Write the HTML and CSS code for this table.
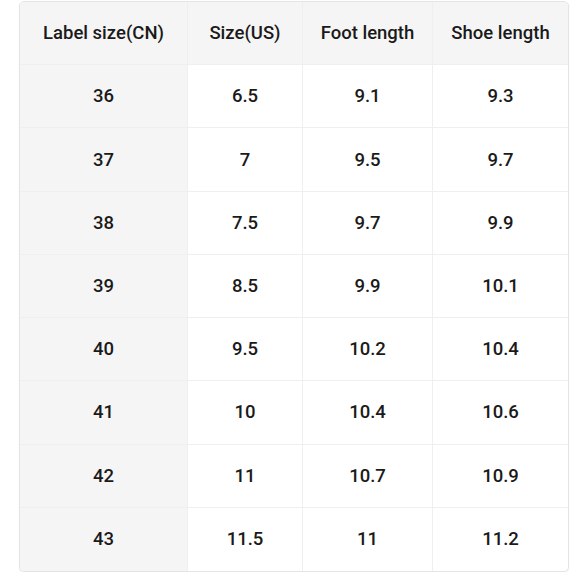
FILE: index.html
```html
<!DOCTYPE html>
<html>
<head>
<meta charset="utf-8">
<link rel="stylesheet" href="styles.css">
</head>
<body>
<div class="table">
  <div class="cell head">Label size(CN)</div>
  <div class="cell head">Size(US)</div>
  <div class="cell head">Foot length</div>
  <div class="cell head">Shoe length</div>

  <div class="cell first">36</div><div class="cell">6.5</div><div class="cell">9.1</div><div class="cell">9.3</div>
  <div class="cell first">37</div><div class="cell">7</div><div class="cell">9.5</div><div class="cell">9.7</div>
  <div class="cell first">38</div><div class="cell">7.5</div><div class="cell">9.7</div><div class="cell">9.9</div>
  <div class="cell first">39</div><div class="cell">8.5</div><div class="cell">9.9</div><div class="cell">10.1</div>
  <div class="cell first">40</div><div class="cell">9.5</div><div class="cell">10.2</div><div class="cell">10.4</div>
  <div class="cell first">41</div><div class="cell">10</div><div class="cell">10.4</div><div class="cell">10.6</div>
  <div class="cell first">42</div><div class="cell">11</div><div class="cell">10.7</div><div class="cell">10.9</div>
  <div class="cell first">43</div><div class="cell">11.5</div><div class="cell">11</div><div class="cell">11.2</div>
</div>
</body>
</html>
```
FILE: styles.css
```css
html, body {
  margin: 0;
  padding: 0;
  background: #ffffff;
}
body {
  padding: 1px 0 0 19px;
  font-family: Roboto, "Noto Sans", sans-serif;
  color: #1a1a1a;
}
.table {
  width: 550px;
  height: 571px;
  box-sizing: border-box;
  display: grid;
  grid-template-columns: 168px 115px 130px 1fr;
  grid-template-rows: repeat(9, 1fr);
  border: 1px solid #e4e4e4;
  border-radius: 5px;
  overflow: hidden;
  box-shadow: 0 1px 2px rgba(0,0,0,0.06);
  background: #ffffff;
}
.cell {
  display: flex;
  align-items: center;
  justify-content: center;
  border-right: 1px solid #efefef;
  border-bottom: 1px solid #efefef;
  font-size: 18.5px;
  font-weight: 500;
}
.cell:nth-child(4n) {
  border-right: none;
}
.cell:nth-last-child(-n+4) {
  border-bottom: none;
}
.head {
  background: #f5f5f5;
  font-size: 18.5px;
}
.first {
  background: #f5f5f5;
}
```
